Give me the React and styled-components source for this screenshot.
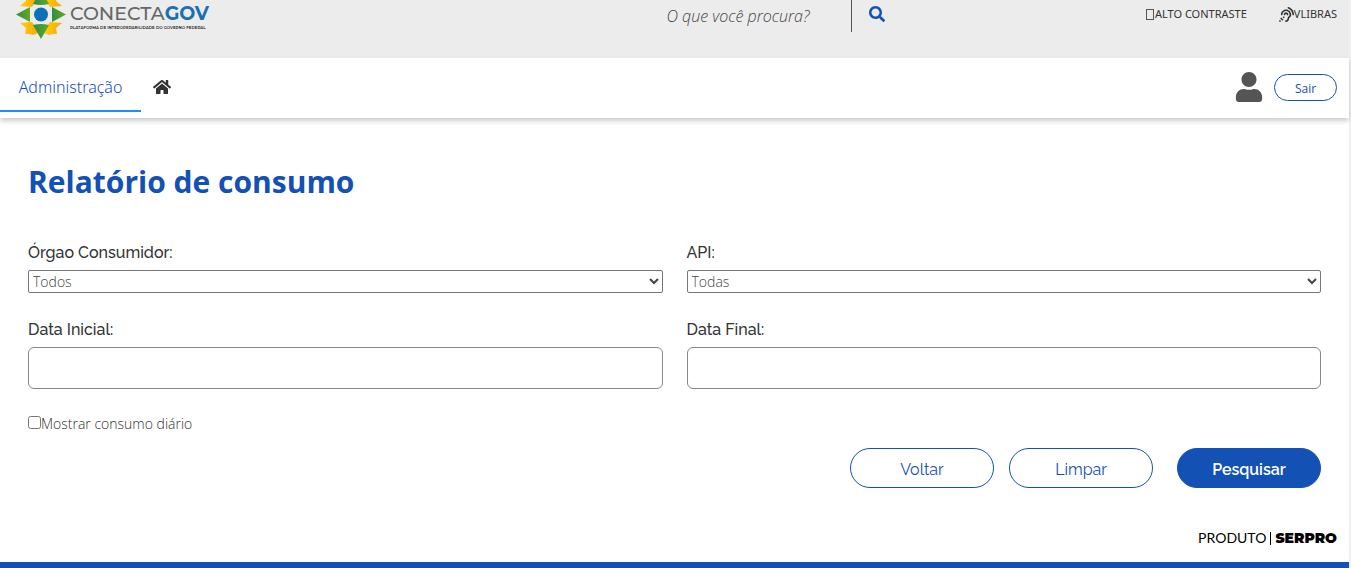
import React from 'react';
import styled, { createGlobalStyle, css } from 'styled-components';
import { FaSearch, FaHome, FaUser, FaAssistiveListeningSystems } from 'react-icons/fa';

const blue = '#1351b4';
const raleway = 'Raleway, Lato, "Liberation Sans", sans-serif';
const segoe = '"Segoe UI", "Open Sans", "Noto Sans", sans-serif';

const GlobalStyle = createGlobalStyle`
  *, *::before, *::after { box-sizing: border-box; }
  body { margin: 0; background: #f0f0f0; color: #333; font: 16px/24px ${raleway}; }
  button, input, select { font: inherit; margin: 0; }
`;

const Page = styled.div`
  margin-right: 2px;
  background: #fff;
`;

const TopBar = styled.header`
  display: grid;
  grid-template-columns: 3fr auto 2fr;
  height: 58px;
  padding: 0 12px 0 16px;
  background: #ececec;
`;

const LogoLink = styled.a`
  display: flex;
  height: 40px;
  gap: 4px;
  text-decoration: none;
  svg { display: block; flex: none; }
`;

const LogoText = styled.span`
  display: flex;
  flex-direction: column;
  padding-top: 4px;
  white-space: nowrap;
`;

const LogoName = styled.span`
  font: 500 19px/20px Montserrat, Raleway, Inter, sans-serif;
  color: #666;
  b { color: #1a6fb5; font-weight: 700; }
`;

const LogoTagline = styled.span`
  font: 600 4px/8px Montserrat, Inter, sans-serif;
  color: #222;
`;

const Search = styled.form`
  display: flex;
  align-items: flex-start;
  height: 32px;
`;

const SearchInput = styled.input`
  width: 192px;
  height: 32px;
  padding: 0 6px;
  border: 0;
  border-right: 1px solid #555;
  background: none;
  font: italic 300 16px/24px "Open Sans", sans-serif;
  &::placeholder { color: #444; opacity: 1; }
`;

const SearchButton = styled.button`
  display: flex;
  padding: 6px 22px 6px 17px;
  border: 0;
  background: none;
  color: ${blue};
`;

const Tools = styled.nav`
  display: flex;
  justify-content: flex-end;
  gap: 32px;
  padding-top: 6px;
`;

const ToolLink = styled.a`
  display: flex;
  align-items: center;
  height: 16px;
  color: #333;
  font: 11px/16px "Noto Sans", sans-serif;
  text-decoration: none;
`;

const MissingGlyph = styled.span`
  width: 8px;
  height: 11px;
  margin-right: 1px;
  border: 1px solid #555;
`;

const MenuBar = styled.nav`
  display: flex;
  align-items: center;
  height: 60px;
  padding-right: 12px;
  background: #fff;
  box-shadow: 0 3px 5px rgba(0, 0, 0, 0.2);
`;

const MenuTab = styled.a`
  width: 141px;
  height: 54px;
  margin-bottom: 6px;
  padding-top: 17px;
  border-bottom: 2px solid #1890ff;
  color: ${blue};
  font: 300 16px/24px "Noto Sans", sans-serif;
  text-align: center;
  text-decoration: none;
`;

const HomeLink = styled.a`
  display: flex;
  margin: 0 auto 2px 12px;
  color: #333;
`;

const UserIcon = styled(FaUser)`
  margin: 0 10px 2px 0;
  color: #555;
`;

const Button = styled.button`
  width: 144px;
  height: 40px;
  padding: 3px 0 0;
  border: 1px solid ${blue};
  border-radius: 100px;
  background: #fff;
  color: ${blue};
  ${(p) => p.$primary && css`
    margin-left: 9px;
    background: ${blue};
    color: #fff;
    font-weight: 600;
  `}
  ${(p) => p.$small && css`
    width: 63px;
    height: 27px;
    margin-bottom: 2px;
    font: 12px/20px "Open Sans", sans-serif;
  `}
`;

const Main = styled.main`
  padding: 40px 28px 0;
`;

const Title = styled.h1`
  margin: 0 0 35px;
  color: ${blue};
  font: 700 30px/48px ${segoe};
`;

const Fields = styled.div`
  display: grid;
  grid-template-columns: 1fr 1fr;
  gap: 25px 24px;
`;

const Field = styled.div`
  display: flex;
  flex-direction: column;
  gap: 5px;
`;

const Label = styled.label`
  font-weight: 500;
`;

const Select = styled.select`
  height: 23px;
  padding: 0;
  border: 1px solid #767676;
  border-radius: 2px;
  background: #fff;
  color: #444;
  font: 300 14px/20px "Open Sans", sans-serif;
`;

const TextInput = styled.input`
  height: 42px;
  padding: 0 12px;
  border: 1px solid #888;
  border-radius: 6px;
  background: #fff;
`;

const CheckLabel = styled.label`
  display: flex;
  align-items: center;
  height: 24px;
  margin-top: 23px;
  color: #333;
  font: 300 14px/24px "Open Sans", sans-serif;
  input { width: 13px; height: 13px; margin-bottom: 3px; }
`;

const Actions = styled.div`
  display: flex;
  justify-content: flex-end;
  gap: 15px;
  margin-top: 12px;
`;

const Footer = styled.footer`
  display: flex;
  justify-content: flex-end;
  height: 80px;
  padding: 40px 12px 0;
  border-bottom: 6px solid ${blue};
`;

const Product = styled.span`
  display: flex;
  align-items: center;
  height: 20px;
  color: #000;
  font: 14px/20px Lato, sans-serif;
  b { margin-left: 4px; padding-left: 4px; border-left: 1px solid #000; font: 900 14px/13px Montserrat, Lato, sans-serif; }
`;

function LogoMark() {
  return (
    <svg width="50" height="40" viewBox="0 0 50 40" aria-hidden="true">
      <defs>
        <linearGradient id="leaf" x1="0" x2="1">
          <stop offset="0" stopColor="#2f8f3f" />
          <stop offset="1" stopColor="#63a829" />
        </linearGradient>
        <linearGradient id="sun" x1="0" x2="1">
          <stop offset="0" stopColor="#fdd00a" />
          <stop offset="1" stopColor="#f9a50b" />
        </linearGradient>
      </defs>
      <g fill="url(#sun)">
        <path d="M4 23L16 22L18 25L22 33L17 35L13 34L9 34L10 28Z" />
        <path d="M46 23L34 22L32 25L28 33L33 35L37 34L41 34L40 28Z" />
        <path d="M4 6L16 7L18 4L22 -4L17 -6L13 -5L9 -5L10 1Z" />
        <path d="M46 6L34 7L32 4L28 -4L33 -6L37 -5L41 -5L40 1Z" />
      </g>
      <g fill="url(#leaf)">
        <path d="M14 7V22L0 14.500Z" />
        <path d="M36 7V22L50 14.500Z" />
        <path d="M17 25Q25 23 33 25L25 39Z" />
        <path d="M17 4Q25 6 33 4L25 -10Z" />
      </g>
      <circle cx="25" cy="14.500" r="7" fill="#0b72ba" />
    </svg>
  );
}

export default function App() {
  return (
    <>
      <GlobalStyle />
      <Page>
        <TopBar>
          <LogoLink href="#" aria-label="ConectaGov">
            <LogoMark />
            <LogoText>
              <LogoName>CONECTA<b>GOV</b></LogoName>
              <LogoTagline>PLATAFORMA DE INTEROPERABILIDADE DO GOVERNO FEDERAL</LogoTagline>
            </LogoText>
          </LogoLink>
          <Search>
            <SearchInput type="search" aria-label="Buscar" placeholder="O que você procura?" />
            <SearchButton type="button" aria-label="Pesquisar"><FaSearch size={16} /></SearchButton>
          </Search>
          <Tools>
            <ToolLink href="#"><MissingGlyph />ALTO CONTRASTE</ToolLink>
            <ToolLink href="#"><FaAssistiveListeningSystems size={15} />VLIBRAS</ToolLink>
          </Tools>
        </TopBar>
        <MenuBar>
          <MenuTab href="#">Administração</MenuTab>
          <HomeLink href="#" aria-label="Início"><FaHome size={18} /></HomeLink>
          <UserIcon size={30} />
          <Button type="button" $small>Sair</Button>
        </MenuBar>
        <Main>
          <Title>Relatório de consumo</Title>
          <Fields>
            <Field>
              <Label htmlFor="orgao">Órgao Consumidor:</Label>
              <Select id="orgao"><option>Todos</option></Select>
            </Field>
            <Field>
              <Label htmlFor="api">API:</Label>
              <Select id="api"><option>Todas</option></Select>
            </Field>
            <Field>
              <Label htmlFor="inicio">Data Inicial:</Label>
              <TextInput id="inicio" type="text" />
            </Field>
            <Field>
              <Label htmlFor="fim">Data Final:</Label>
              <TextInput id="fim" type="text" />
            </Field>
          </Fields>
          <CheckLabel><input type="checkbox" />Mostrar consumo diário</CheckLabel>
          <Actions>
            <Button type="button">Voltar</Button>
            <Button type="button">Limpar</Button>
            <Button type="button" $primary>Pesquisar</Button>
          </Actions>
        </Main>
        <Footer><Product>PRODUTO<b>SERPRO</b></Product></Footer>
      </Page>
    </>
  );
}
